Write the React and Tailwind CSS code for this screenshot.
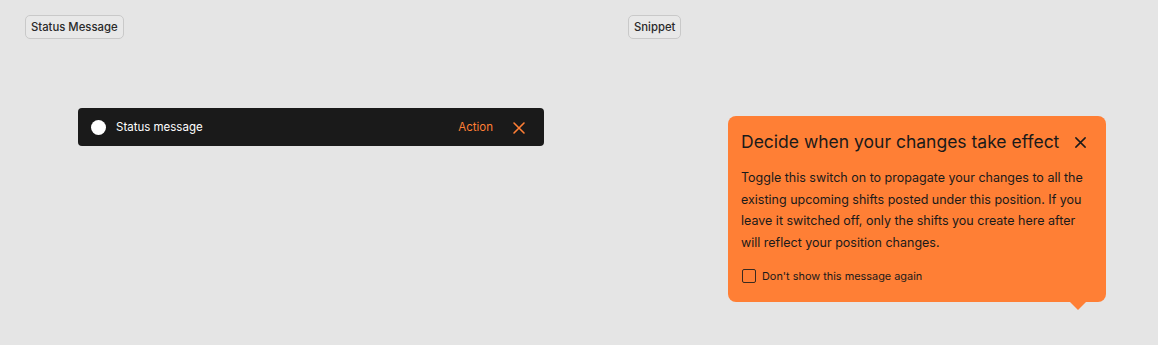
import React from "react";

function XIcon({ className }) {
  return (
    <svg viewBox="0 0 14 14" className={className} fill="none" stroke="currentColor" strokeWidth="1.6" strokeLinecap="round">
      <path d="M2 2L12 12M12 2L2 12" />
    </svg>
  );
}

export default function App() {
  return (
    <div className="w-[1158px] h-[345px] bg-[#e5e5e5] flex" style={{ fontFamily: "Inter, 'Noto Sans', sans-serif" }}>
      <div className="w-[603px] pl-[25px] pt-[15px]">
        <div className="flex w-fit h-[24px] items-center px-[5px] border border-[#c9c9c9] rounded-[5px] text-[11.3px] font-medium text-[#2a2a2a] bg-[#e8e8e8]">
          Status Message
        </div>
        <div className="ml-[53px] mt-[69px] w-[466px] h-[38px] bg-[#1a1a1a] rounded-[4px] flex items-center pl-[13px] pr-[18px] pt-[1px]">
          <div className="w-[15px] h-[15px] rounded-full bg-white" />
          <span className="ml-[10px] text-white text-[11.5px]">Status message</span>
          <span className="ml-auto text-[#ff7f35] text-[11.5px]">Action</span>
          <XIcon className="ml-[19px] w-[14px] h-[14px] text-[#ff7f35]" />
        </div>
      </div>
      <div className="flex-1 pl-[25px] pt-[15px]">
        <div className="flex w-fit h-[24px] items-center px-[5px] border border-[#c9c9c9] rounded-[5px] text-[11.3px] font-medium text-[#2a2a2a] bg-[#e8e8e8]">
          Snippet
        </div>
        <div className="relative ml-[100px] mt-[77px] w-[378px] bg-[#ff7f35] rounded-[8px] px-[13px] pt-[14px] pb-[18px] text-[#1a1a1a]">
          <div className="flex items-center justify-between">
            <h2 className="text-[17.5px] leading-[24px]">Decide when your changes take effect</h2>
            <XIcon className="w-[13px] h-[13px] mr-[6px]" />
          </div>
          <p className="mt-[13px] text-[12.5px] leading-[21.5px]">
            Toggle this switch on to propagate your changes to all the existing upcoming shifts posted under this position. If you leave it switched off, only the shifts you create here after will reflect your position changes.
          </p>
          <label className="mt-[15px] flex items-center">
            <span className="w-[14px] h-[14px] ml-[1px] border-[1.5px] border-[#3a2a20] rounded-[2px]" />
            <span className="ml-[6px] text-[10.9px]">Don't show this message again</span>
          </label>
          <div className="absolute right-[20px] bottom-[-8px] w-0 h-0 border-l-[8px] border-r-[8px] border-t-[8px] border-l-transparent border-r-transparent border-t-[#ff7f35]" />
        </div>
      </div>
    </div>
  );
}
